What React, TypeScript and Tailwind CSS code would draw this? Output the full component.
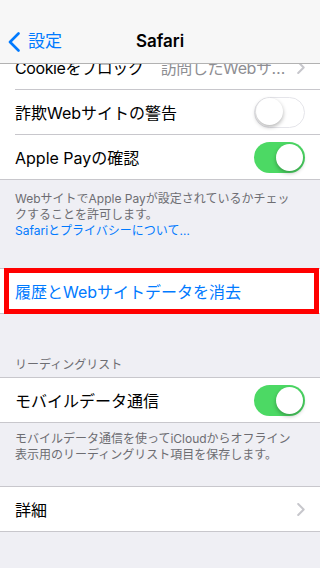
import React from 'react';

const FONT = 'font-["Inter","Noto_Sans_CJK_JP",sans-serif]';

function Chevron() {
  return (
    <svg width="8" height="13" viewBox="0 0 8 13" className="shrink-0">
      <path d="M1.2 1 L6.7 6.5 L1.2 12" stroke="#c7c7cc" strokeWidth="2" fill="none" strokeLinecap="round" strokeLinejoin="round" />
    </svg>
  );
}

function Toggle({ on }: { on: boolean }) {
  return (
    <div
      className={
        on
          ? 'relative w-[51px] h-[31px] rounded-full bg-[#4cd964] shrink-0'
          : 'relative w-[51px] h-[31px] rounded-full bg-white border-[1.5px] border-[#e5e5ea] shrink-0'
      }
    >
      <div
        className={
          on
            ? 'absolute top-[2px] right-[2px] w-[27px] h-[27px] rounded-full bg-white shadow-[0_2px_4px_rgba(0,0,0,0.3)]'
            : 'absolute top-[0.5px] left-[0.5px] w-[27px] h-[27px] rounded-full bg-white shadow-[0_2px_4px_rgba(0,0,0,0.3)]'
        }
      />
    </div>
  );
}

function Row({ children, last }: { children: React.ReactNode; last?: boolean }) {
  return (
    <div className="bg-white pl-[15px]">
      <div
        className={
          last
            ? 'h-[44px] flex items-center justify-between pr-[15px] whitespace-nowrap'
            : 'h-[45px] flex items-center justify-between pr-[15px] border-b border-[#c8c7cc] whitespace-nowrap'
        }
      >
        {children}
      </div>
    </div>
  );
}

function Label({ children, blue }: { children: React.ReactNode; blue?: boolean }) {
  return <span className={blue ? 'pt-[2px] text-[#007aff]' : 'pt-[2px]'}>{children}</span>;
}

export default function App() {
  return (
    <div className={`relative w-[320px] h-[568px] overflow-hidden bg-[#efeff4] ${FONT}`}>
      {/* Nav bar */}
      <header className="absolute top-0 left-0 right-0 z-10 bg-[#f7f7f7] border-b border-[#b2b2b2]">
        <div className="h-[20px]" />
        <div className="relative h-[43px] flex items-center">
          <div className="flex items-center pl-[8px] gap-[8px] text-[#007aff] text-[17px]">
            <svg width="12" height="20" viewBox="0 0 12 20">
              <path d="M10.5 1.5 L2 10 L10.5 18.5" stroke="#007aff" strokeWidth="2.6" fill="none" strokeLinecap="round" strokeLinejoin="round" />
            </svg>
            <span>設定</span>
          </div>
          <div className="absolute inset-0 flex items-center justify-center text-[17px] font-semibold text-black">
            Safari
          </div>
        </div>
      </header>

      <main className="pt-[45px] text-[16px] text-black">
        <div className="border-b border-[#c8c7cc]">
          <Row>
            <span className="pt-[2px] tracking-[-0.4px]">Cookieをブロック</span>
            <div className="flex items-center gap-[12px] min-w-0">
              <span className="pt-[2px] text-[#8e8e93] tracking-[-0.4px]">訪問したWebサ…</span>
              <Chevron />
            </div>
          </Row>
          <Row>
            <Label>詐欺Webサイトの警告</Label>
            <Toggle on={false} />
          </Row>
          <Row last>
            <Label>Apple Payの確認</Label>
            <Toggle on />
          </Row>
        </div>

        <div className="pt-[11px] pb-[29px] px-[15px] text-[12px] leading-[16px] text-[#6d6d72]">
          <p className="whitespace-nowrap">WebサイトでApple Payが設定されているかチェッ</p>
          <p className="whitespace-nowrap">クすることを許可します。</p>
          <p className="whitespace-nowrap text-[#007aff]">Safariとプライバシーについて…</p>
        </div>

        <div className="relative border-y border-[#c8c7cc]">
          <Row last>
            <Label blue>履歴とWebサイトデータを消去</Label>
          </Row>
          <div className="absolute top-[-1px] bottom-[-1px] left-[4px] right-[1px] border-[5px] border-[#ff0000]" />
        </div>

        <div className="h-[63px] flex items-end pb-[4px] px-[15px] text-[12px] leading-[16px] text-[#6d6d72]">
          リーディングリスト
        </div>

        <div className="border-y border-[#c8c7cc]">
          <Row last>
            <Label>モバイルデータ通信</Label>
            <Toggle on />
          </Row>
        </div>

        <div className="pt-[8px] pb-[23px] px-[15px] text-[12px] leading-[16px] text-[#6d6d72]">
          <p className="whitespace-nowrap">モバイルデータ通信を使ってiCloudからオフライン</p>
          <p className="whitespace-nowrap">表示用のリーディングリスト項目を保存します。</p>
        </div>

        <div className="border-y border-[#c8c7cc]">
          <Row last>
            <Label>詳細</Label>
            <Chevron />
          </Row>
        </div>
      </main>
    </div>
  );
}
